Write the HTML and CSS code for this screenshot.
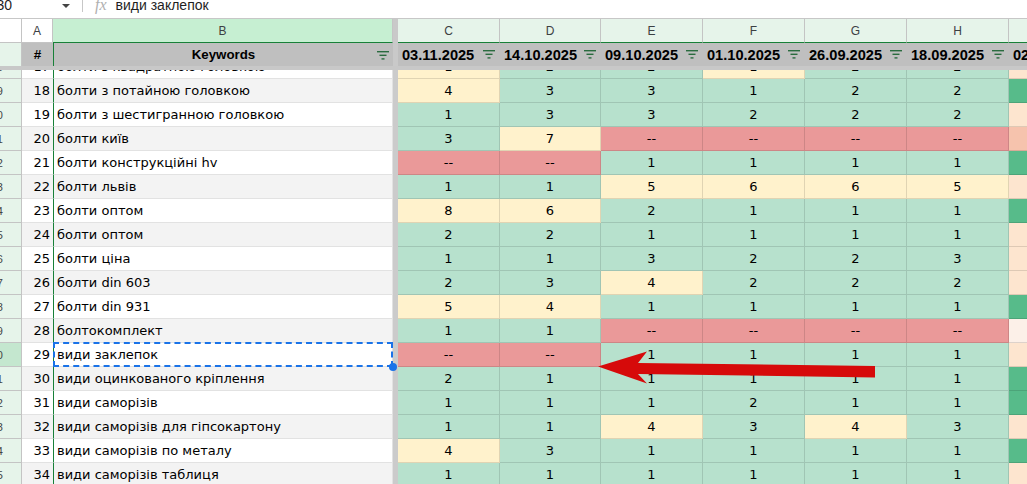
FILE: index.html
```html
<!DOCTYPE html>
<html lang="uk">
<head>
<meta charset="utf-8">
<title>Sheet</title>
<link rel="stylesheet" href="styles.css">
</head>
<body>
<div class="app">
  <div class="fbar">
    <div class="namebox"><span class="nb-text">B30</span><span class="nb-caret"></span></div>
    <div class="fsep"></div>
    <span class="fx">fx</span>
    <span class="ftext">види заклепок</span>
  </div>

  <div class="grid colhdr">
    <div class="corner"></div>
    <div class="ch cha">A</div>
    <div class="ch chb">B</div>
    <div class="fz"></div>
    <div class="ch">C</div>
    <div class="ch">D</div>
    <div class="ch">E</div>
    <div class="ch">F</div>
    <div class="ch">G</div>
    <div class="ch">H</div>
    <div class="ch">I</div>
  </div>

  <div class="grid hdrrow">
    <div class="rh"></div>
    <div class="hc hnum">#</div>
    <div class="hc hkw"><span class="kw">Keywords</span><svg class="flt" viewBox="0 0 12 9"><rect x="0" y="0" width="12" height="1.4"/><rect x="2.5" y="3.6" width="7" height="1.4"/><rect x="4.5" y="7.2" width="3" height="1.4"/></svg></div>
    <div class="fz"></div>
    <div class="hc hd"><span>03.11.2025</span><svg class="flt" viewBox="0 0 12 9"><rect x="0" y="0" width="12" height="1.4"/><rect x="2.5" y="3.6" width="7" height="1.4"/><rect x="4.5" y="7.2" width="3" height="1.4"/></svg></div>
    <div class="hc hd"><span>14.10.2025</span><svg class="flt" viewBox="0 0 12 9"><rect x="0" y="0" width="12" height="1.4"/><rect x="2.5" y="3.6" width="7" height="1.4"/><rect x="4.5" y="7.2" width="3" height="1.4"/></svg></div>
    <div class="hc hd"><span>09.10.2025</span><svg class="flt" viewBox="0 0 12 9"><rect x="0" y="0" width="12" height="1.4"/><rect x="2.5" y="3.6" width="7" height="1.4"/><rect x="4.5" y="7.2" width="3" height="1.4"/></svg></div>
    <div class="hc hd"><span>01.10.2025</span><svg class="flt" viewBox="0 0 12 9"><rect x="0" y="0" width="12" height="1.4"/><rect x="2.5" y="3.6" width="7" height="1.4"/><rect x="4.5" y="7.2" width="3" height="1.4"/></svg></div>
    <div class="hc hd"><span>26.09.2025</span><svg class="flt" viewBox="0 0 12 9"><rect x="0" y="0" width="12" height="1.4"/><rect x="2.5" y="3.6" width="7" height="1.4"/><rect x="4.5" y="7.2" width="3" height="1.4"/></svg></div>
    <div class="hc hd"><span>18.09.2025</span><svg class="flt" viewBox="0 0 12 9"><rect x="0" y="0" width="12" height="1.4"/><rect x="2.5" y="3.6" width="7" height="1.4"/><rect x="4.5" y="7.2" width="3" height="1.4"/></svg></div>
    <div class="hc hd"><span>02.09.2025</span><svg class="flt" viewBox="0 0 12 9"><rect x="0" y="0" width="12" height="1.4"/><rect x="2.5" y="3.6" width="7" height="1.4"/><rect x="4.5" y="7.2" width="3" height="1.4"/></svg></div>
  </div>

  <div class="hfreeze"></div>

  <div class="body">
    <div class="rows">
      <div class="grid row"><div class="rh"><span>18</span></div><div class="a">17</div><div class="b">болти з квадратною головкою</div><div class="fz"></div><div class="c y">1</div><div class="c g">2</div><div class="c g">2</div><div class="c y">1</div><div class="c g">2</div><div class="c g">2</div><div class="c ip"></div></div>
      <div class="grid row band"><div class="rh"><span>19</span></div><div class="a">18</div><div class="b">болти з потайною головкою</div><div class="fz"></div><div class="c y">4</div><div class="c g">3</div><div class="c g">3</div><div class="c g">1</div><div class="c g">2</div><div class="c g">2</div><div class="c ig"></div></div>
      <div class="grid row"><div class="rh"><span>20</span></div><div class="a">19</div><div class="b">болти з шестигранною головкою</div><div class="fz"></div><div class="c g">1</div><div class="c g">3</div><div class="c g">3</div><div class="c g">2</div><div class="c g">2</div><div class="c g">2</div><div class="c ip"></div></div>
      <div class="grid row band"><div class="rh"><span>21</span></div><div class="a">20</div><div class="b">болти київ</div><div class="fz"></div><div class="c g">3</div><div class="c y">7</div><div class="c r">--</div><div class="c r">--</div><div class="c r">--</div><div class="c r">--</div><div class="c is"></div></div>
      <div class="grid row"><div class="rh"><span>22</span></div><div class="a">21</div><div class="b">болти конструкційні hv</div><div class="fz"></div><div class="c r">--</div><div class="c r">--</div><div class="c g">1</div><div class="c g">1</div><div class="c g">1</div><div class="c g">1</div><div class="c ig"></div></div>
      <div class="grid row band"><div class="rh"><span>23</span></div><div class="a">22</div><div class="b">болти львів</div><div class="fz"></div><div class="c g">1</div><div class="c g">1</div><div class="c y">5</div><div class="c y">6</div><div class="c y">6</div><div class="c y">5</div><div class="c ip"></div></div>
      <div class="grid row"><div class="rh"><span>24</span></div><div class="a">23</div><div class="b">болти оптом</div><div class="fz"></div><div class="c y">8</div><div class="c y">6</div><div class="c g">2</div><div class="c g">1</div><div class="c g">1</div><div class="c g">1</div><div class="c ig"></div></div>
      <div class="grid row band"><div class="rh"><span>25</span></div><div class="a">24</div><div class="b">болти оптом</div><div class="fz"></div><div class="c g">2</div><div class="c g">2</div><div class="c g">1</div><div class="c g">1</div><div class="c g">1</div><div class="c g">1</div><div class="c ip"></div></div>
      <div class="grid row"><div class="rh"><span>26</span></div><div class="a">25</div><div class="b">болти ціна</div><div class="fz"></div><div class="c g">1</div><div class="c g">1</div><div class="c g">3</div><div class="c g">2</div><div class="c g">2</div><div class="c g">3</div><div class="c ip"></div></div>
      <div class="grid row band"><div class="rh"><span>27</span></div><div class="a">26</div><div class="b">болти din 603</div><div class="fz"></div><div class="c g">2</div><div class="c g">3</div><div class="c y">4</div><div class="c g">2</div><div class="c g">2</div><div class="c g">2</div><div class="c ip"></div></div>
      <div class="grid row"><div class="rh"><span>28</span></div><div class="a">27</div><div class="b">болти din 931</div><div class="fz"></div><div class="c y">5</div><div class="c y">4</div><div class="c g">1</div><div class="c g">1</div><div class="c g">1</div><div class="c g">1</div><div class="c ig"></div></div>
      <div class="grid row band"><div class="rh"><span>29</span></div><div class="a">28</div><div class="b">болтокомплект</div><div class="fz"></div><div class="c g">1</div><div class="c g">1</div><div class="c r">--</div><div class="c r">--</div><div class="c r">--</div><div class="c r">--</div><div class="c il"></div></div>
      <div class="grid row"><div class="rh rh-sel"><span>30</span></div><div class="a">29</div><div class="b b-sel">види заклепок<span class="marquee"></span><span class="handle"></span></div><div class="fz"></div><div class="c r">--</div><div class="c r">--</div><div class="c g">1</div><div class="c g">1</div><div class="c g">1</div><div class="c g">1</div><div class="c ip"></div></div>
      <div class="grid row band"><div class="rh"><span>31</span></div><div class="a">30</div><div class="b">види оцинкованого кріплення</div><div class="fz"></div><div class="c g">2</div><div class="c g">1</div><div class="c g">1</div><div class="c g">1</div><div class="c g">1</div><div class="c g">1</div><div class="c ig"></div></div>
      <div class="grid row"><div class="rh"><span>32</span></div><div class="a">31</div><div class="b">види саморізів</div><div class="fz"></div><div class="c g">1</div><div class="c g">1</div><div class="c g">1</div><div class="c g">2</div><div class="c g">1</div><div class="c g">1</div><div class="c ig"></div></div>
      <div class="grid row band"><div class="rh"><span>33</span></div><div class="a">32</div><div class="b">види саморізів для гіпсокартону</div><div class="fz"></div><div class="c g">1</div><div class="c g">1</div><div class="c y">4</div><div class="c g">3</div><div class="c y">4</div><div class="c g">3</div><div class="c ip"></div></div>
      <div class="grid row"><div class="rh"><span>34</span></div><div class="a">33</div><div class="b">види саморізів по металу</div><div class="fz"></div><div class="c y">4</div><div class="c g">3</div><div class="c g">1</div><div class="c g">1</div><div class="c g">1</div><div class="c g">1</div><div class="c ig"></div></div>
      <div class="grid row band"><div class="rh"><span>35</span></div><div class="a">34</div><div class="b">види саморізів таблиця</div><div class="fz"></div><div class="c g">1</div><div class="c g">1</div><div class="c g">1</div><div class="c g">1</div><div class="c g">1</div><div class="c g">1</div><div class="c ip"></div></div>
    </div>
  </div>

  <svg class="arrow" viewBox="0 0 1027 484" width="1027" height="484">
    <polygon points="598,366.5 647,351.5 638,363 875,366 875,377.5 638,374 647,383.5" fill="#d60a0a"/>
  </svg>
</div>
</body>
</html>
```

FILE: styles.css
```css
* { box-sizing: border-box; margin: 0; padding: 0; }
html, body { width: 1027px; height: 484px; overflow: hidden; background: #fff; }
body { font-family: "DejaVu Sans", sans-serif; color: #000; }

.app { position: relative; width: 1027px; height: 484px; overflow: hidden; }

/* formula bar */
.fbar {
  height: 19px;
  border-bottom: 1px solid #c7c7c7;
  display: flex;
  align-items: flex-start;
  font-family: "Liberation Sans", Arial, sans-serif;
}
.namebox { width: 82px; display: flex; align-items: flex-start; }
.nb-text {
  width: 12px; overflow: hidden; display: flex; justify-content: flex-end;
  font-size: 14px; line-height: 10px; color: #1f1f1f; white-space: nowrap;
}
.nb-caret {
  margin-left: auto; margin-right: 12px; margin-top: 4px;
  width: 0; height: 0;
  border-left: 4px solid transparent; border-right: 4px solid transparent;
  border-top: 4px solid #444;
}
.fsep { width: 1px; height: 12px; background: #c7c7c7; }
.fx {
  margin-left: 12px; font-family: "Liberation Serif", serif; font-style: italic;
  font-size: 16px; line-height: 9px; color: #b0b0b0;
}
.ftext { margin-left: 9px; font-size: 14px; line-height: 10px; color: #1f1f1f; }

/* grid: wider than the window, clipped on the right like the screenshot */
.grid {
  display: grid;
  width: 1111px;
  grid-template-columns: 22px 31px 340px 5px 102px 101px 102px 102px 102px 102px 102px;
}
.fz { background: #c9c9c9; }

/* column letters */
.colhdr { height: 24px; font-family: "Liberation Sans", Arial, sans-serif; }
.corner { background: #fff; border-right: 1px solid #c4c4c4; border-bottom: 1px solid #c4c4c4; }
.ch {
  display: flex; align-items: center; justify-content: center;
  font-size: 12px; color: #3c4043;
  background: #e6f4ea;
  border-right: 1px solid #c4c4c4;
  border-bottom: 1px solid #188038;
}
.cha { background: #fff; border-bottom-color: #c4c4c4; }
.chb { background: #c6efd2; }

/* frozen header row */
.hdrrow { height: 23px; font-family: "Liberation Sans", Arial, sans-serif; font-weight: bold; }
.hdrrow .rh { background: #e6f4ea; border-right: 1px solid #c4c4c4; }
.hc { background: #bfbfbf; display: flex; align-items: center; color: #000; white-space: nowrap; overflow: hidden; }
.hnum { justify-content: center; font-size: 13.5px; }
.hkw { border-left: 1px solid #188038; justify-content: center; position: relative; font-size: 13.3px; }
.hkw .flt { position: absolute; right: 4px; top: 8px; }
.hd { padding-left: 4px; padding-right: 5px; justify-content: space-between; font-size: 14.6px; }
.flt { width: 12px; height: 9px; fill: #2a6b3f; flex: none; }

.hfreeze { height: 4px; background: #c8c8c8; }

/* body */
.body { height: 414px; overflow: hidden; }
.rows { margin-top: -15px; }
.row { height: 24px; font-size: 13px; }
.row > div { border-bottom: 1px solid #e2e2e2; display: flex; align-items: center; white-space: nowrap; overflow: hidden; }
.row .rh {
  background: #e6f4ea; border-right: 1px solid #c4c4c4; border-bottom-color: #c4c4c4;
  justify-content: flex-end; padding-right: 18px;
  font-family: "Liberation Sans", Arial, sans-serif; font-size: 11px; color: #444;
}
.row .rh-sel { background: #c4e7cf; }
.row .a { justify-content: flex-end; padding-right: 3px; }
.row .b { border-left: 1px solid #188038; border-right: 1px solid #e2e2e2; padding-left: 3px; }
.row.band .a, .row.band .b { background: #f3f3f3; }
.row .fz { border-bottom: 0; background: #cbcbcb; }
.row .c { justify-content: center; border-right: 1px solid rgba(0,0,0,0.12); border-bottom-color: rgba(0,0,0,0.12); }
.c.g { background: #b7e1cd; }
.c.y { background: #fff2cc; }
.c.r { background: #ea9999; }
.c.ig { background: #57bb8a; }
.c.ip { background: #fde5cf; }
.c.is { background: #f6c3ad; }
.c.il { background: #fcf0e8; }

/* selected cell */
.row .b-sel { overflow: visible; position: relative; }
.marquee {
  position: absolute; left: -1px; top: -1px; right: -1px; bottom: -1px;
  border: 2px dashed #1a73e8;
}
.handle {
  position: absolute; right: -5px; bottom: -5px;
  width: 8px; height: 8px; border-radius: 50%; background: #1a73e8;
}

.arrow { position: absolute; left: 0; top: 0; pointer-events: none; }
```
